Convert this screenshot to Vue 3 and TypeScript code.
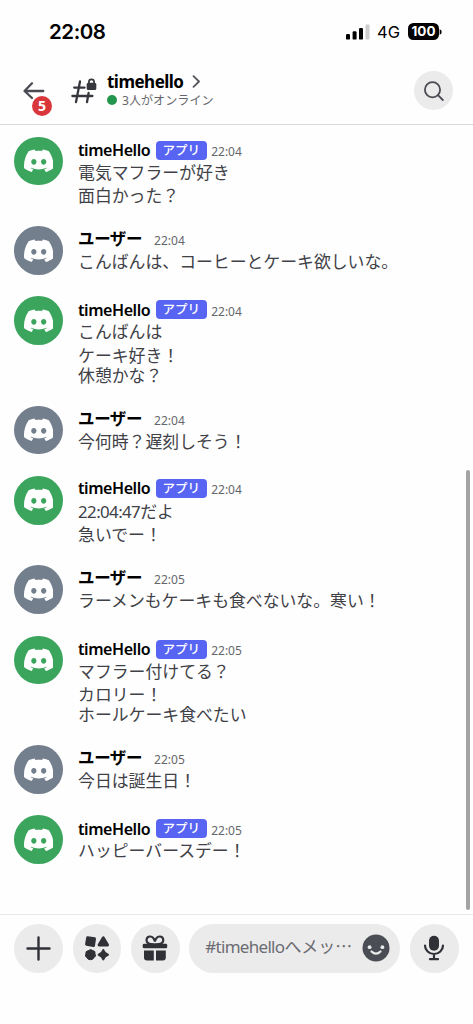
<script setup lang="ts">
interface Message {
  bot: boolean
  time: string
  lines: string[]
  clock?: string
}

const messages: Message[] = [
  { bot: true, time: '22:04', lines: ['電気マフラーが好き', '面白かった？'] },
  { bot: false, time: '22:04', lines: ['こんばんは、コーヒーとケーキ欲しいな。'] },
  { bot: true, time: '22:04', lines: ['こんばんは', 'ケーキ好き！', '休憩かな？'] },
  { bot: false, time: '22:04', lines: ['今何時？遅刻しそう！'] },
  { bot: true, time: '22:04', lines: ['だよ', '急いでー！'], clock: '22:04:47' },
  { bot: false, time: '22:05', lines: ['ラーメンもケーキも食べないな。寒い！'] },
  { bot: true, time: '22:05', lines: ['マフラー付けてる？', 'カロリー！', 'ホールケーキ食べたい'] },
  { bot: false, time: '22:05', lines: ['今日は誕生日！'] },
  { bot: true, time: '22:05', lines: ['ハッピーバースデー！'] },
]
</script>

<template>
  <div class="screen" lang="ja">
    <div class="status">
      <span class="clock">22:08</span>
      <div class="indicators">
        <svg class="signal" width="24" height="16" viewBox="0 0 24 16">
          <rect x="0" y="10" width="4" height="5.6" rx="1.2" />
          <rect x="6.6" y="7.2" width="4" height="8.4" rx="1.2" />
          <rect x="13" y="4" width="4" height="11.6" rx="1.2" />
          <rect x="19.5" y="0.5" width="4" height="15.1" rx="1.2" fill="#ccc" />
        </svg>
        <span class="network">4G</span>
        <span class="battery">100</span>
        <svg width="3" height="6" viewBox="0 0 3 6"><path d="M.7.3Q2.7 1 2.7 3T.7 5.7Z" /></svg>
      </div>
    </div>

    <header class="header">
      <div class="back">
        <svg width="24" height="20" viewBox="0 0 24 20" fill="none" stroke="#4b4c53" stroke-width="2.3" stroke-linecap="round" stroke-linejoin="round">
          <path d="M21.300 10H2.700M10 2.300 2.500 10l7.500 7" />
        </svg>
        <span class="unread">5</span>
      </div>
      <svg class="hash" width="28" height="28" viewBox="0 0 28 28">
        <g fill="none" stroke="#36373d" stroke-width="2.3" stroke-linecap="round">
          <path d="M10 5.500 6 26M18.600 17 17 26M4.200 11.600h10.300M2.400 20h20" />
        </g>
        <path d="M18.900 7V5.900a2.600 2.600 0 0 1 5.200 0V7" fill="none" stroke="#36373d" stroke-width="1.700" />
        <rect x="16.700" y="6.700" width="9.600" height="7.200" rx="1.500" fill="#36373d" />
      </svg>
      <div class="channel">
        <div class="title">
          <span>timehello</span>
          <svg width="9" height="13" viewBox="0 0 9 13" fill="none" stroke="#55565c" stroke-width="1.800" stroke-linecap="round" stroke-linejoin="round">
            <path d="m1.500 1.200 5.500 5.300-5.500 5.300" />
          </svg>
        </div>
        <div class="online"><i></i><span>3人がオンライン</span></div>
      </div>
      <div class="search">
        <svg width="20" height="20" viewBox="0 0 20 20" fill="none" stroke="#4b4c53" stroke-width="1.800" stroke-linecap="round">
          <circle cx="8.500" cy="8.700" r="7.600" />
          <path d="m14 14.200 4.800 4.800" />
        </svg>
      </div>
    </header>

    <main class="messages">
      <article v-for="(m, i) in messages" :key="i" class="message" :class="{ raised: m.clock }">
        <div class="avatar" :class="{ green: m.bot }">
          <svg width="29.500" height="29.500" viewBox="0 0 24 24" fill="#fff">
            <path d="M20.317 4.3698a19.7913 19.7913 0 00-4.8851-1.5152.0741.0741 0 00-.0785.0371c-.211.3753-.4447.8648-.6083 1.2495-1.8447-.2762-3.68-.2762-5.4868 0-.1636-.3933-.4058-.8742-.6177-1.2495a.077.077 0 00-.0785-.037 19.7363 19.7363 0 00-4.8852 1.515.0699.0699 0 00-.0321.0277C.5334 9.0458-.319 13.5799.0992 18.0578a.0824.0824 0 00.0312.0561c2.0528 1.5076 4.0413 2.4228 5.9929 3.0294a.0777.0777 0 00.0842-.0276c.4616-.6304.8731-1.2952 1.226-1.9942a.076.076 0 00-.0416-.1057c-.6528-.2476-1.2743-.5495-1.8722-.8923a.077.077 0 01-.0076-.1277c.1258-.0943.2517-.1923.3718-.2914a.0743.0743 0 01.0776-.0105c3.9278 1.7933 8.18 1.7933 12.0614 0a.0739.0739 0 01.0785.0095c.1202.099.246.1981.3728.2924a.077.077 0 01-.0066.1276 12.2986 12.2986 0 01-1.873.8914.0766.0766 0 00-.0407.1067c.3604.698.7719 1.3628 1.225 1.9932a.076.076 0 00.0842.0286c1.961-.6067 3.9495-1.5219 6.0023-3.0294a.077.077 0 00.0313-.0552c.5004-5.177-.8382-9.6739-3.5485-13.6604a.061.061 0 00-.0312-.0286zM8.02 15.3312c-1.1825 0-2.1569-1.0857-2.1569-2.419 0-1.3332.9555-2.4189 2.157-2.4189 1.2108 0 2.1757 1.0952 2.1568 2.419 0 1.3332-.9555 2.4189-2.1569 2.4189zm7.9748 0c-1.1825 0-2.1569-1.0857-2.1569-2.419 0-1.3332.9554-2.4189 2.1569-2.4189 1.2108 0 2.1757 1.0952 2.1568 2.419 0 1.3332-.946 2.4189-2.1568 2.4189Z" />
          </svg>
        </div>
        <div class="body">
          <div class="meta" :class="{ app: m.bot }">
            <span v-if="m.bot" class="name">timeHello</span>
            <span v-else class="name user">ユーザー</span>
            <span v-if="m.bot" class="tag">アプリ</span>
            <time>{{ m.time }}</time>
          </div>
          <p v-for="(line, n) in m.lines" :key="line"><span v-if="m.clock && n === 0" class="digits">{{ m.clock }}</span>{{ line }}</p>
        </div>
      </article>
    </main>

    <footer class="composer">
      <div class="round">
        <svg width="25" height="25" viewBox="0 0 25 25" stroke="#303137" stroke-width="2.400" stroke-linecap="round"><path d="M12.500 1.500v22M1.500 12.500h22" /></svg>
      </div>
      <div class="round">
        <svg width="26" height="26" viewBox="0 0 26 26" fill="#303137" stroke="#303137" stroke-linejoin="round">
          <path d="M3.600 2.600 10.600 3.700 9.600 10.500 2.500 9.300Z" stroke-width="2.800" />
          <path d="M19.300 2.600 23.600 10H15Z" stroke-width="2.800" />
          <path d="m6.600 14.600 2.300 1 2 1 .1 2.300.5 2.100-1.600 1.700-1.300 1.600-2.200.4-2.200-.5-1.300-1.500-1.500-1.700.5-2 .2-2.300 2-1Z" stroke-width="1" />
          <path d="M19.300 15q1.100 3.500 4.700 4.700-3.600 1.200-4.700 4.700-1.100-3.500-4.700-4.700 3.600-1.200 4.700-4.700Z" stroke-width="2" />
        </svg>
      </div>
      <div class="round">
        <svg width="26" height="26" viewBox="0 0 26 26" fill="#303137">
          <path d="M12.900 9.500C8 9 4.800 9 4.500 5.400 4.400 0 11.600 0 12.900 6.500 14.200 0 21.400 0 21.300 5.400 21 9 17.800 9 12.900 9.500" fill="none" stroke="#303137" stroke-width="2.200" />
          <rect x="0.700" y="8.800" width="24.500" height="4.500" rx="1.400" />
          <path d="M2 15.400h9.800v10H5a3 3 0 0 1-3-3ZM14 15.400h9.800v7a3 3 0 0 1-3 3H14Z" />
        </svg>
      </div>
      <div class="input">
        <span class="placeholder"><b>#timehello</b>へメッ…</span>
        <svg width="28" height="28" viewBox="0 0 28 28">
          <circle cx="14" cy="14" r="13.500" fill="#4b4d55" />
          <circle cx="7.600" cy="13.200" r="1.900" fill="#ebebeb" />
          <circle cx="20.400" cy="13.200" r="1.900" fill="#ebebeb" />
          <path d="M9.500 17.500q4.500 4.400 9 0" fill="none" stroke="#ebebeb" stroke-width="2.200" stroke-linecap="round" />
        </svg>
      </div>
      <div class="round">
        <svg width="22" height="26" viewBox="0 0 22 26" fill="none" stroke="#303137" stroke-width="2.200" stroke-linecap="round">
          <rect x="6" y="0.800" width="10" height="15" rx="5" fill="#303137" stroke="none" />
          <path d="M2 10.500a9 8.500 0 0 0 18 0M11 19v5M7 24.200h8" />
        </svg>
      </div>
    </footer>
    <div class="scrollbar"></div>
  </div>
</template>

<style>
body {
  margin: 0;
  background: #fff;
}
</style>

<style scoped>
.screen {
  position: relative;
  display: flex;
  flex-direction: column;
  width: 473px;
  height: 1024px;
  overflow: hidden;
  background: #fefefe;
  color: #000;
  font-family: "Noto Sans", "Noto Sans CJK JP", sans-serif;
}
.status {
  display: flex;
  justify-content: space-between;
  height: 62px;
  padding: 0 31px 0 49px;
  box-sizing: border-box;
  font-family: Inter, sans-serif;
}
.clock {
  font-size: 20.500px;
  line-height: 63px;
  font-weight: 600;
  letter-spacing: -0.450px;
}
.indicators {
  display: flex;
  align-items: center;
  height: 63px;
}
.network {
  margin: 1px 8px 0 7px;
  font-size: 16.500px;
  font-weight: 400;
}
.battery {
  width: 31px;
  height: 17px;
  border-radius: 5.500px;
  background: #000;
  color: #fff;
  font-size: 13.500px;
  line-height: 17px;
  font-weight: 700;
  text-align: center;
}
.header {
  display: flex;
  align-items: center;
  height: 63px;
  padding: 0 20px 5px 22px;
  border-bottom: 1px solid #d9d9da;
  box-sizing: border-box;
}
.back {
  position: relative;
  display: flex;
  width: 24px;
}
.unread {
  position: absolute;
  top: 15px;
  left: 10px;
  width: 20px;
  height: 20px;
  border-radius: 50%;
  background: #da373c;
  color: #fff;
  font-size: 14px;
  line-height: 20px;
  font-weight: 700;
  text-align: center;
}
.hash {
  margin: -2px 0 0 23.500px;
}
.channel {
  margin: 0 auto 1px 9.500px;
}
.title {
  display: flex;
  align-items: center;
  gap: 9px;
  height: 20px;
  font-size: 17px;
  font-weight: 700;
  letter-spacing: -0.520px;
}
.online {
  display: flex;
  align-items: center;
  gap: 5px;
  height: 17px;
  color: #65666c;
  font-size: 12.100px;
}
.online i {
  width: 10px;
  height: 10px;
  border-radius: 50%;
  background: #23964e;
}
.search {
  display: flex;
  align-items: center;
  justify-content: center;
  width: 39px;
  height: 39px;
  border-radius: 50%;
  background: #ebebeb;
}
.messages {
  display: flex;
  flex-direction: column;
  gap: 20px;
  height: 788.500px;
  padding: 11.500px 14.400px 0;
  box-sizing: border-box;
}
.message {
  display: flex;
  gap: 15px;
  min-height: 50.200px;
}
.avatar {
  display: flex;
  align-items: center;
  justify-content: center;
  width: 48.700px;
  height: 48.700px;
  border-radius: 50%;
  background: #747f8d;
}
.avatar.green {
  background: #3ba55d;
}
.meta {
  display: flex;
  align-items: center;
  height: 26px;
}
.meta.app {
  height: 25px;
  padding-top: 1px;
}
.raised .meta.app {
  height: 26px;
  padding-top: 0;
  margin-top: -0.500px;
  margin-bottom: 0.500px;
}
.name {
  font-size: 16px;
  line-height: 26px;
  font-weight: 600;
  letter-spacing: -0.450px;
}
.name.user {
  width: 71px;
  font-weight: 700;
  font-size: 16.500px;
}
.tag {
  width: 51px;
  height: 19px;
  margin: 0 4.500px 0 5.500px;
  border-radius: 4px;
  background: #5865f2;
  color: #fff;
  font-size: 12.500px;
  line-height: 19px;
  font-weight: 500;
  text-align: center;
}
time {
  margin-top: 3px;
  color: #65666c;
  font-size: 12px;
}
.user + time {
  margin-left: 5px;
}
p {
  height: 20px;
  margin: 0;
  color: #404147;
  font-size: 16.850px;
  line-height: 20px;
  white-space: nowrap;
}
p:nth-of-type(2) {
  margin-top: 3.500px;
}
.digits {
  letter-spacing: -0.600px;
}
.composer {
  display: flex;
  align-items: flex-start;
  height: 110px;
  padding: 9.500px 14.400px 0;
  border-top: 1.500px solid #eaeaeb;
  gap: 9.600px;
  box-sizing: border-box;
}
.round {
  display: flex;
  flex: none;
  align-items: center;
  justify-content: center;
  width: 48.700px;
  height: 48.700px;
  border-radius: 50%;
  background: #ebebeb;
}
.input {
  display: flex;
  flex: 1;
  align-items: center;
  justify-content: space-between;
  height: 48.700px;
  padding: 0 10px 0 16px;
  border-radius: 25px;
  background: #ebebeb;
  color: #6c6d73;
  font-size: 17px;
  box-sizing: border-box;
  white-space: nowrap;
}
.placeholder {
  margin-bottom: 6px;
  font-family: "Noto Sans CJK JP", sans-serif;
}
.input b {
  font-family: "Noto Sans", sans-serif;
  font-weight: 400;
  letter-spacing: -0.700px;
}
.scrollbar {
  position: absolute;
  top: 470px;
  left: 466px;
  width: 3.500px;
  height: 440px;
  border-radius: 2px;
  background: #a3a3a3;
}
</style>
